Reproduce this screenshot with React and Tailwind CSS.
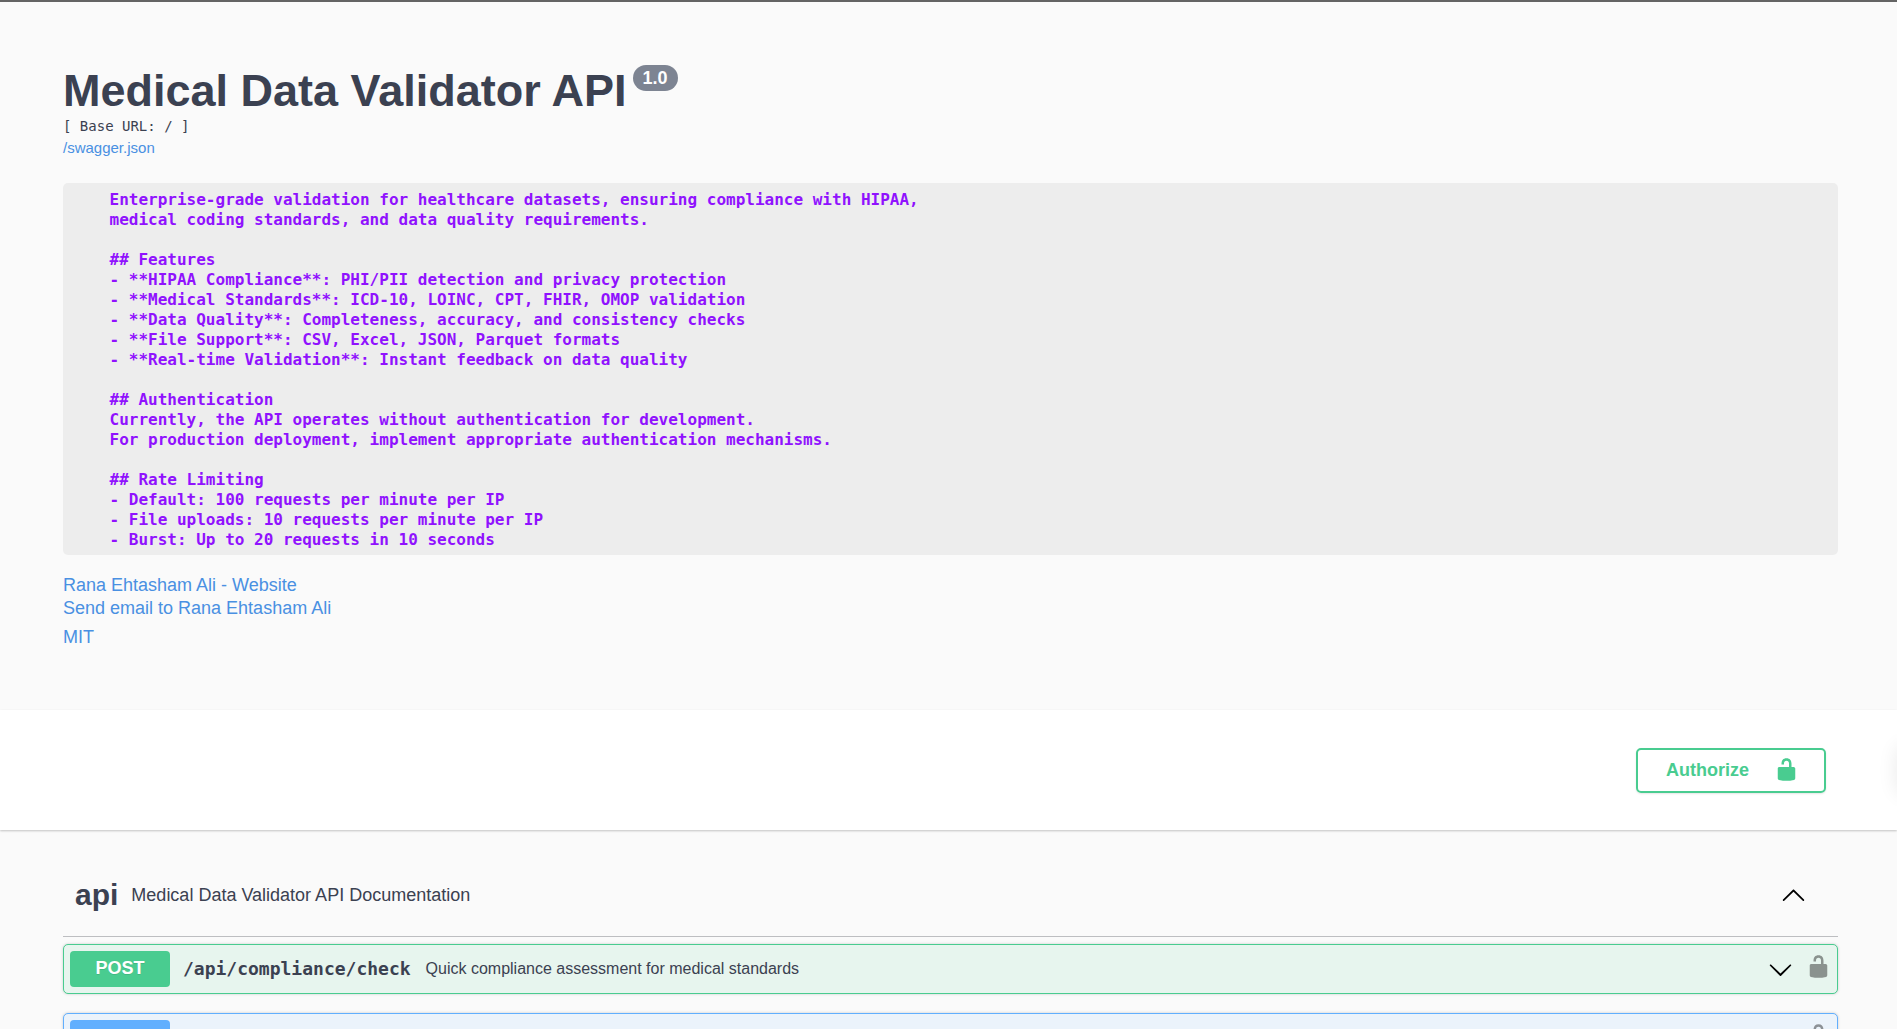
const description = `    Enterprise-grade validation for healthcare datasets, ensuring compliance with HIPAA,
    medical coding standards, and data quality requirements.

    ## Features
    - **HIPAA Compliance**: PHI/PII detection and privacy protection
    - **Medical Standards**: ICD-10, LOINC, CPT, FHIR, OMOP validation
    - **Data Quality**: Completeness, accuracy, and consistency checks
    - **File Support**: CSV, Excel, JSON, Parquet formats
    - **Real-time Validation**: Instant feedback on data quality

    ## Authentication
    Currently, the API operates without authentication for development.
    For production deployment, implement appropriate authentication mechanisms.

    ## Rate Limiting
    - Default: 100 requests per minute per IP
    - File uploads: 10 requests per minute per IP
    - Burst: Up to 20 requests in 10 seconds`;

function UnlockIcon({ className }) {
  return (
    <svg viewBox="0 0 20 20" className={className} fill="currentColor" aria-hidden="true">
      <path d="M15.8 8H14V5.6C14 2.703 12.665 1 10 1 7.334 1 6 2.703 6 5.6V6h2v-.801C8 3.754 8.797 3 10 3c1.203 0 2 .754 2 2.199V8H4c-.553 0-1 .646-1 1.199V17c0 .549.428 1.139.951 1.307l1.197.387C5.672 18.861 6.55 19 7.1 19h5.8c.549 0 1.428-.139 1.951-.307l1.196-.387c.524-.167.953-.757.953-1.306V9.199C17 8.646 16.352 8 15.8 8z" />
    </svg>
  );
}

function ArrowUp({ className }) {
  return (
    <svg viewBox="0 0 20 20" className={className} fill="currentColor" aria-hidden="true">
      <path d="M17.418 14.908c.272.268.709.268.979 0s.271-.701 0-.969l-7.908-7.83c-.27-.268-.707-.268-.979 0l-7.908 7.83c-.27.268-.27.701 0 .969.271.268.709.268.979 0L10 7.767l7.418 7.141z" />
    </svg>
  );
}

function ArrowDown({ className }) {
  return (
    <svg viewBox="0 0 20 20" className={className} fill="currentColor" aria-hidden="true">
      <path d="M17.418 6.109c.272-.268.709-.268.979 0s.271.701 0 .969l-7.908 7.83c-.27.268-.707.268-.979 0l-7.908-7.83c-.27-.268-.27-.701 0-.969.271-.268.709-.268.979 0L10 13.25l7.418-7.141z" />
    </svg>
  );
}

const tones = {
  post: { row: "border-[#49cc90] bg-[#e7f5ee]", badge: "bg-[#49cc90]" },
  get: { row: "border-[#61affe] bg-[#ebf3fb]", badge: "bg-[#61affe]" },
};

function Operation({ tone, method, path, summary }) {
  return (
    <div className={"flex items-center rounded-[5px] border p-1.5 shadow-[0_0_3px_rgba(0,0,0,0.19)] " + tones[tone].row}>
      <button type="button" aria-label={method ? undefined : "Operation"} className="flex min-w-0 flex-1 items-center text-left">
        <span
          className={
            "min-h-9 w-[100px] rounded-[4px] pt-[7px] pb-[9px] text-center text-[18px] leading-5 font-bold text-white [text-shadow:0_1px_0_rgba(0,0,0,0.1)] " +
            tones[tone].badge
          }
        >
          {method}
        </span>
        <span className="pr-[15px] pl-[13px] font-['DejaVu_Sans_Mono',monospace] text-[18px] leading-6 font-bold">{path}</span>
        <span className="flex-1 text-[16px] leading-5">{summary}</span>
        <ArrowDown className="size-[25px] text-black" />
      </button>
      <button type="button" aria-label="Authorization button unlocked" className="ml-[13px] pb-1.5">
        <UnlockIcon className="size-[25px] text-black opacity-40" />
      </button>
    </div>
  );
}

export default function App() {
  return (
    <div className="h-screen overflow-hidden border-t-2 border-[#646464] bg-[#fafafa] font-['Liberation_Sans',Arial,sans-serif] text-[#3b4151]">
      <header className="pt-[61px] pr-[59px] pb-[61px] pl-[63px]">
        <hgroup>
          <h1 className="flex items-start text-[45px] leading-[55px] font-bold">
            Medical Data Validator API
            <span className="mt-0.5 ml-1.5 rounded-full bg-[#7d8492] px-2.5 text-[18px] leading-[26px] text-white">1.0</span>
          </h1>
          <pre className="font-['DejaVu_Sans_Mono',monospace] text-[14px] leading-4">[ Base URL: / ]</pre>
          <a href="#swagger" className="mt-1 block w-fit text-[15px] leading-5 text-[#4990e2]">
            /swagger.json
          </a>
        </hgroup>
        <pre className="mt-[25px] rounded-[5px] bg-[#ededed] pt-[7px] pr-2 pb-[5px] pl-2 font-['DejaVu_Sans_Mono',monospace] text-[16px] leading-5 font-bold text-[#9012fe]">
          <code className="font-['DejaVu_Sans_Mono',monospace]">{description}</code>
        </pre>
        <div className="mt-[19px] flex flex-col items-start text-[18px] leading-[23px] text-[#4990e2]">
          <a href="#website">Rana Ehtasham Ali - Website</a>
          <a href="#email">Send email to Rana Ehtasham Ali</a>
          <a href="#license" className="mt-1.5">MIT</a>
        </div>
      </header>

      <section className="relative flex justify-end bg-white pt-[38px] pr-[71px] pb-[37px] shadow-[0_1px_2px_rgba(0,0,0,0.22)]">
        <button
          type="button"
          className="flex items-center rounded-[5px] border-2 border-[#49cc90] pt-[7px] pr-[25px] pb-[9px] pl-7 text-[18px] leading-6 font-bold text-[#49cc90] shadow-[0_1px_2px_rgba(0,0,0,0.1)]"
        >
          Authorize
          <UnlockIcon className="ml-[25px] size-[25px]" />
        </button>
        <div className="absolute top-9 left-full h-12 w-12 rounded-lg shadow-[0_0_20px_rgba(0,0,0,0.09)]" />
      </section>

      <main className="pt-[31px] pr-[59px] pl-[63px]">
        <h2 className="border-b border-[#bdbec1] pb-2">
          <button type="button" className="flex w-full items-center py-3 pr-8 pl-3 text-left">
            <span className="text-[30px] leading-[43px] font-bold">api</span>
            <span className="flex-1 pl-[13px] text-[18px] leading-6">Medical Data Validator API Documentation</span>
            <ArrowUp className="size-[25px] text-black" />
          </button>
        </h2>
        <div className="mt-[7px] flex flex-col gap-[19px]">
          <Operation
            tone="post"
            method="POST"
            path="/api/compliance/check"
            summary="Quick compliance assessment for medical standards"
          />
          <Operation tone="get" />
        </div>
      </main>
    </div>
  );
}
